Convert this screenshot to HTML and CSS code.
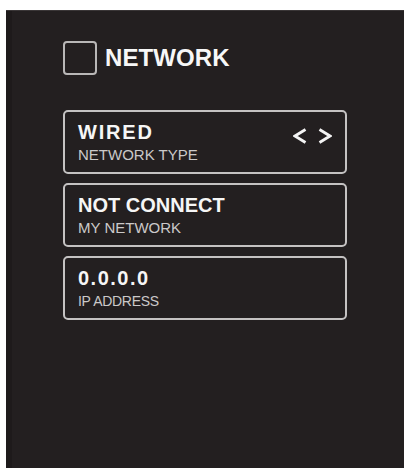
FILE: index.html
```html
<!DOCTYPE html>
<html lang="en">
<head>
<meta charset="utf-8">
<title>Network</title>
<link rel="stylesheet" href="styles.css">
</head>
<body>
<main class="panel">
  <header class="header">
    <span class="checkbox" role="checkbox" aria-checked="false"></span>
    <h1 class="heading">NETWORK</h1>
  </header>
  <section class="cards">
    <div class="card">
      <div class="card-text">
        <div class="value value-wide">WIRED</div>
        <div class="label">NETWORK TYPE</div>
      </div>
      <div class="arrows" aria-label="previous / next">
        <svg class="chev" width="14" height="18" viewBox="0 0 14 18" aria-hidden="true"><polyline points="12.5,2.5 2,9 12.5,15.5" fill="none" stroke="#f4f4f4" stroke-width="2.8" stroke-linejoin="miter" stroke-linecap="butt"/></svg>
        <svg class="chev" width="14" height="18" viewBox="0 0 14 18" aria-hidden="true"><polyline points="1.5,2.5 12,9 1.5,15.5" fill="none" stroke="#f4f4f4" stroke-width="2.8" stroke-linejoin="miter" stroke-linecap="butt"/></svg>
      </div>
    </div>
    <div class="card">
      <div class="card-text">
        <div class="value">NOT CONNECT</div>
        <div class="label">MY NETWORK</div>
      </div>
    </div>
    <div class="card">
      <div class="card-text">
        <div class="value value-ip">0.0.0.0</div>
        <div class="label label-tight">IP ADDRESS</div>
      </div>
    </div>
  </section>
</main>
</body>
</html>
```

FILE: styles.css
```css
html, body {
  margin: 0;
  padding: 0;
  background: #ffffff;
  height: 100%;
  overflow: hidden;
}

body {
  font-family: "Liberation Sans", Arial, sans-serif;
}

.panel {
  box-sizing: border-box;
  margin: 10px 2px 0 6px;
  height: 458px;
  background: #231f20;
  border-top: 1px solid #3a3637;
  box-shadow: inset 6px 0 0 #1e1a1b;
  padding: 30px 0 0 57px;
}

.header {
  display: flex;
  align-items: center;
  gap: 8px;
  height: 34px;
}

.checkbox {
  box-sizing: border-box;
  width: 34px;
  height: 34px;
  border: 2px solid #b9b7b7;
  border-radius: 4px;
  flex: none;
}

.heading {
  margin: 0;
  font-size: 24px;
  font-weight: 700;
  color: #f7f7f7;
  line-height: 28px;
  letter-spacing: 0.1px;
}

.cards {
  margin-top: 35px;
  width: 284px;
  display: flex;
  flex-direction: column;
  gap: 9px;
}

.card {
  box-sizing: border-box;
  height: 64px;
  border: 2px solid #c4c2c2;
  border-radius: 5px;
  padding: 8px 13px 0 13px;
  display: flex;
  justify-content: space-between;
  align-items: flex-start;
}

.value {
  font-size: 20px;
  font-weight: 700;
  line-height: 24px;
  color: #f6f6f6;
  white-space: nowrap;
}

.value-wide {
  letter-spacing: 1.8px;
}

.value-ip {
  letter-spacing: 1.5px;
}

.label {
  margin-top: 2px;
  font-size: 15px;
  line-height: 18px;
  color: #cbc9c9;
  white-space: nowrap;
}

.label-tight {
  font-size: 14px;
  letter-spacing: -0.3px;
}

.arrows {
  display: flex;
  gap: 11px;
  margin-top: 7px;
}

.chev {
  display: block;
}
```
